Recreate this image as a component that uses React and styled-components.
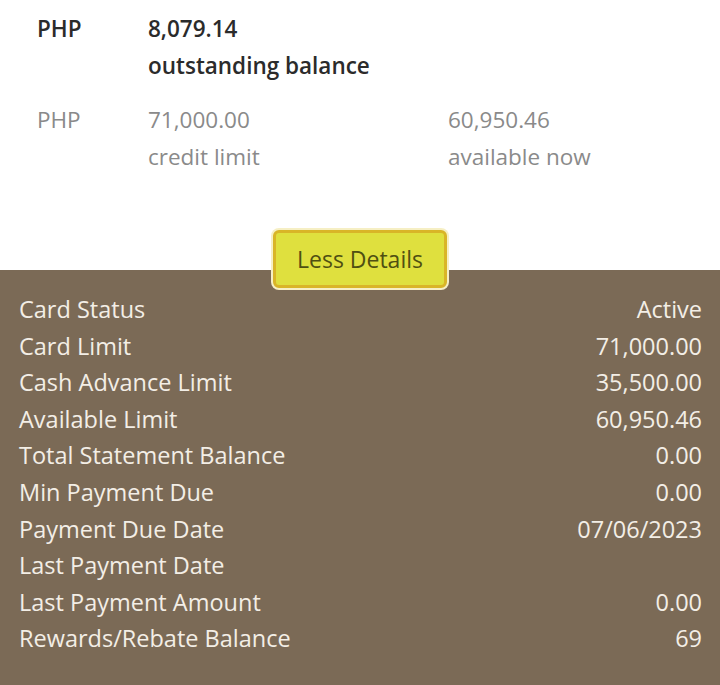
import React from "react";
import styled, { createGlobalStyle } from "styled-components";

const Global = createGlobalStyle`
  html, body {
    margin: 0;
    padding: 0;
    background: #ffffff;
  }
  body {
    font-family: "Open Sans", "Noto Sans", sans-serif;
  }
`;

const Page = styled.div`
  width: 720px;
  height: 685px;
  display: flex;
  flex-direction: column;
  overflow: hidden;
`;

const Summary = styled.div`
  padding: 10px 0 0 37px;
  display: flex;
  flex-direction: column;
  gap: 17px;
`;

const SumRow = styled.div`
  display: grid;
  grid-template-columns: 111px 300px 1fr;
  font-size: 22.5px;
  line-height: 37px;
  color: ${(p) => (p.$strong ? "#2b2b2b" : "#8a8a8a")};
  font-weight: ${(p) => (p.$strong ? 600 : 400)};
`;

const Cell = styled.div`
  display: flex;
  flex-direction: column;
`;

const ButtonWrap = styled.div`
  display: flex;
  justify-content: center;
  margin-top: 55px;
  margin-bottom: -18px;
  position: relative;
  z-index: 1;
`;

const Toggle = styled.button`
  width: 174px;
  height: 58px;
  border-radius: 6px;
  border: 3px solid #d9b527;
  box-shadow: 0 0 0 2px #f6efc4;
  background: #dfe03e;
  color: #4f4f12;
  font-family: inherit;
  font-size: 23px;
  cursor: pointer;
`;

const Panel = styled.div`
  flex: 1;
  background: #7b6a56;
  padding: 21px 18px 0 19px;
  display: flex;
  flex-direction: column;
`;

const Line = styled.div`
  display: flex;
  justify-content: space-between;
  color: #f3eee6;
  font-size: 23.5px;
  line-height: 36.6px;
`;

const details = [
  ["Card Status", "Active"],
  ["Card Limit", "71,000.00"],
  ["Cash Advance Limit", "35,500.00"],
  ["Available Limit", "60,950.46"],
  ["Total Statement Balance", "0.00"],
  ["Min Payment Due", "0.00"],
  ["Payment Due Date", "07/06/2023"],
  ["Last Payment Date", ""],
  ["Last Payment Amount", "0.00"],
  ["Rewards/Rebate Balance", "69"],
];

export default function App() {
  return (
    <Page>
      <Global />
      <Summary>
        <SumRow $strong>
          <span>PHP</span>
          <Cell>
            <span>8,079.14</span>
            <span>outstanding balance</span>
          </Cell>
        </SumRow>
        <SumRow>
          <span>PHP</span>
          <Cell>
            <span>71,000.00</span>
            <span>credit limit</span>
          </Cell>
          <Cell>
            <span>60,950.46</span>
            <span>available now</span>
          </Cell>
        </SumRow>
      </Summary>
      <ButtonWrap>
        <Toggle>Less Details</Toggle>
      </ButtonWrap>
      <Panel>
        {details.map(([label, value]) => (
          <Line key={label}>
            <span>{label}</span>
            <span>{value}</span>
          </Line>
        ))}
      </Panel>
    </Page>
  );
}
